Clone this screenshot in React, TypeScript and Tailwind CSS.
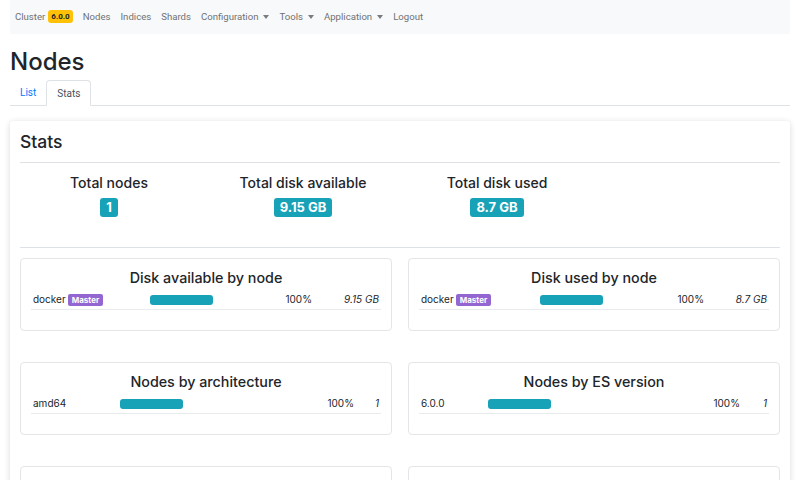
import React from 'react';

const navItems = ['Nodes', 'Indices', 'Shards'];
const dropItems = ['Configuration', 'Tools', 'Application'];

type Row = { name: string; master?: boolean; pct: string; value: string };

type Panel = {
  title: string;
  rows: Row[];
  nameW: string;
  pctW: string;
};

// last two panels sit below the fold, only their top edges show
const panels: Panel[] = [
  { title: 'Disk available by node', rows: [{ name: 'docker', master: true, pct: '100%', value: '9.15 GB' }], nameW: 'w-[119px]', pctW: 'w-[164px]' },
  { title: 'Disk used by node', rows: [{ name: 'docker', master: true, pct: '100%', value: '8.7 GB' }], nameW: 'w-[121px]', pctW: 'w-[166px]' },
  { title: 'Nodes by architecture', rows: [{ name: 'amd64', pct: '100%', value: '1' }], nameW: 'w-[89px]', pctW: 'w-[236px]' },
  { title: 'Nodes by ES version', rows: [{ name: '6.0.0', pct: '100%', value: '1' }], nameW: 'w-[69px]', pctW: 'w-[254px]' },
  { title: '', rows: [], nameW: 'w-[89px]', pctW: 'w-[236px]' },
  { title: '', rows: [], nameW: 'w-[89px]', pctW: 'w-[236px]' },
];

const totals = [
  { label: 'Total nodes', value: '1' },
  { label: 'Total disk available', value: '9.15 GB' },
  { label: 'Total disk used', value: '8.7 GB' },
];

const Caret = () => (
  <span className="ml-[5px] inline-block h-0 w-0 border-x-[3.5px] border-t-[4px] border-x-transparent border-t-[#7a7d80] align-middle" />
);

const StatPanel = ({ panel }: { panel: Panel }) => (
  <div className="h-[73px] rounded-[4px] border border-[#e3e5e8] bg-white px-[10px] pt-[10px]">
    {panel.title && (
      <h5 className="text-center text-[14.3px] font-medium leading-[18px] text-[#212529]">{panel.title}</h5>
    )}
    {panel.rows.map((row, i) => (
      <div key={i} className="mt-[3px] flex h-[20px] items-center border-b border-[#e9ecef] text-[10px] text-[#212529]">
        <div className={`${panel.nameW} flex shrink-0 items-center pl-[2px]`}>
          {row.name}
          {row.master && (
            <span className="ml-[2px] rounded-[2px] bg-[#9466d2] px-[4px] py-[1px] text-[8px] font-bold leading-[10px] text-white">Master</span>
          )}
        </div>
        <div className={`${panel.pctW} flex shrink-0 items-center`}>
          <div className="h-[10px] w-[63px] rounded-[3px] bg-[#17a2b8]" />
          <div className="flex-1 pr-[2px] text-right">{row.pct}</div>
        </div>
        <div className="flex-1 pr-[2px] text-right italic">{row.value}</div>
      </div>
    ))}
  </div>
);

export default function App() {
  return (
    <div className="min-h-[480px] bg-white px-[10px] font-['Inter',sans-serif] text-[#212529]">
      <nav className="flex h-[34px] items-center bg-[#f8f9fa] px-[5px] font-['Roboto',sans-serif] text-[9.6px] text-[#6f7275]">
        <span className="flex items-center">
          Cluster
          <span className="ml-[3px] rounded-[3px] bg-[#ffc107] px-[3px] py-[1.5px] text-[8px] font-bold leading-[10px] text-[#212529]">6.0.0</span>
        </span>
        {navItems.map((n) => (
          <span key={n} className="pl-[10px]">{n}</span>
        ))}
        {dropItems.map((n) => (
          <span key={n} className="flex items-center pl-[10px]">
            {n}
            <Caret />
          </span>
        ))}
        <span className="pl-[10px]">Logout</span>
      </nav>

      <h1 className="mt-[12px] text-[24px] font-medium leading-[32px]">Nodes</h1>

      <div className="mt-[2px] flex h-[26px] border-b border-[#dee2e6] font-['Roboto',sans-serif] text-[10px]">
        <span className="flex items-center px-[10px] text-[#007bff]">List</span>
        <span className="-mb-px flex items-center rounded-t-[4px] border border-b-white border-[#dee2e6] bg-white px-[10px] text-[#495057]">Stats</span>
      </div>

      <div className="mt-[15px] h-[400px] rounded-[4px] bg-white px-[10px] pt-[10px] shadow-[0_1px_6px_rgba(0,0,0,0.15)]">
        <h4 className="text-[17.5px] font-medium leading-[22px]">Stats</h4>
        <div className="mt-[9px] border-t border-[#dee2e6]" />
        <div className="-ml-[8px] grid grid-cols-[194px_194px_194px_1fr] pt-[11px]">
          {totals.map((t) => (
            <div key={t.label} className="flex flex-col items-center">
              <div className="text-[14px] font-medium leading-[18px]">{t.label}</div>
              <span className="mt-[6px] rounded-[3px] bg-[#17a2b8] px-[6px] text-[13px] font-bold leading-[19px] text-white">{t.value}</span>
            </div>
          ))}
        </div>
        <div className="mt-[30px] border-t border-[#dee2e6]" />
        <div className="mt-[10px] grid grid-cols-2 gap-x-[16px] gap-y-[31px]">
          {panels.map((p, i) => (
            <StatPanel key={i} panel={p} />
          ))}
        </div>
      </div>
    </div>
  );
}
